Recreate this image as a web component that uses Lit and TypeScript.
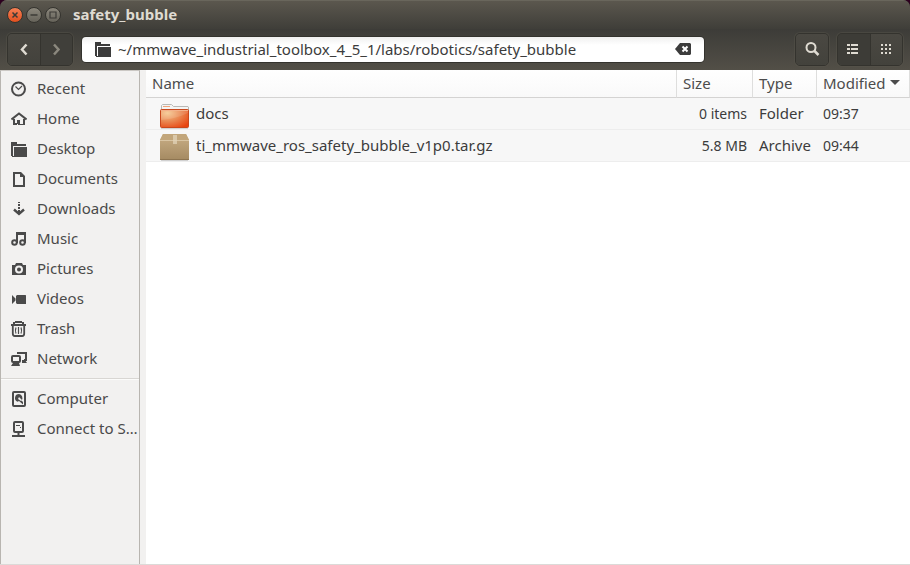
import { LitElement, html, svg, css, nothing, type TemplateResult } from "lit";
import { customElement, state } from "lit/decorators.js";
import { classMap } from "lit/directives/class-map.js";

const icons: Record<string, TemplateResult> = {
  recent: svg`<circle cx="7.5" cy="8" r="6.5" fill="none" stroke="currentColor" stroke-width="2"/><path d="M4.5 5.5 7.5 8.5 11 5" fill="none" stroke="currentColor" stroke-width="1.2"/>`,
  home: svg`<path d="M0.500 8.500 8 2.500 15.500 8.500" fill="none" stroke="currentColor" stroke-width="2"/><path fill="currentColor" d="M2 8h2v4h2V9h3v4h3V8h2v6H7v-1H6v1H2z"/>`,
  folder: svg`<path fill="currentColor" d="M0 1h6v2h9v2H2v10H0zM3 6h13v10H3z"/><path fill="currentColor" d="M1 15h3v1H1z"/>`,
  documents: svg`<path fill="currentColor" fill-rule="evenodd" d="M2 1h8l4 4v11H2zM4 3v11h8V6H9V3z"/>`,
  downloads: svg`<path fill="currentColor" d="M7 1h2v1H7zM7 3h2v2H7zM7 6h2v2H7zM7 9h2v3H7z"/><path d="M3 8.500 8 13 13 8.500" fill="none" stroke="currentColor" stroke-width="2.400"/>`,
  music: svg`<path fill="currentColor" d="M5 1h10v11h-2V4H7v8H5z"/><circle cx="3.500" cy="11.500" r="2.300" fill="none" stroke="currentColor" stroke-width="2"/><circle cx="11.500" cy="11.500" r="2.300" fill="none" stroke="currentColor" stroke-width="2"/>`,
  pictures: svg`<path fill="currentColor" fill-rule="evenodd" d="M1 4h3l1-2h6l1 2h3v10H1zM8 4.500a4 4 0 1 0 0 8 4 4 0 0 0 0-8zm0 2a2 2 0 1 1 0 4 2 2 0 0 1 0-4z"/>`,
  videos: svg`<path fill="currentColor" d="M1 4l3.500 3.500v2L1 13zM6 4h8.500l.5.500v8.500H6L5 12V5z"/>`,
  trash: svg`<path fill="currentColor" d="M4 0h7v1h2v2h2v2H0V3h2V1h2zM4 2v1h7V2z" fill-rule="evenodd"/><path d="M1.800 5v7.500q0 2.500 2 2.500h7.400q2 0 2-2.500V5" fill="none" stroke="currentColor" stroke-width="1.800"/><path d="M5 6.500q-1.200 3 0 6M7.500 6v7M10 6.500q1.200 3 0 6" fill="none" stroke="currentColor" stroke-width="1.200"/>`,
  network: svg`<path d="M7 3V2h8v7h-2" fill="none" stroke="currentColor" stroke-width="2"/><rect x="1" y="5" width="8" height="6" rx="1" fill="none" stroke="currentColor" stroke-width="2"/><path fill="currentColor" d="M2 12h6l1 3H0zM11 9h3l2 3h-5z"/>`,
  computer: svg`<rect x="2" y="1" width="12" height="14" rx="1" fill="none" stroke="currentColor" stroke-width="2"/><path fill="currentColor" fill-rule="evenodd" d="M8 3a4 4 0 0 0-1.500 7.700L8 10l4 3.500v-2.500l-1.500-1.500A4 4 0 0 0 8 3zm0 3 3 3-1 1-3-2z"/>`,
  server: svg`<rect x="3" y="1" width="9" height="10" rx="1" fill="none" stroke="currentColor" stroke-width="2"/><path fill="currentColor" d="M5 4h4v1H5zM9 6h1v1H9zM6.500 11h2v3h-2zM1 14h13v2H1z"/>`,
  back: svg`<path d="M10.500 3.500 6 8.500l4.500 5" fill="none" stroke="currentColor" stroke-width="2.500"/>`,
  forward: svg`<path d="M6 3.500l4.500 5-4.500 5" fill="none" stroke="currentColor" stroke-width="2.500"/>`,
  search: svg`<circle cx="7" cy="6.500" r="4.500" fill="none" stroke="currentColor" stroke-width="2"/><path d="M10 9.500 14.500 14" fill="none" stroke="currentColor" stroke-width="2.500"/>`,
  list: svg`<path fill="currentColor" d="M1 3h3v2H1zM5 3h7v2H5zM1 7h3v2H1zM5 7h7v2H5zM1 11h3v2H1zM5 11h7v2H5z"/>`,
  grid: svg`<path fill="currentColor" d="M3 3h2v2H3zM7 3h2v2H7zM11 3h2v2h-2zM3 7h2v2H3zM7 7h2v2H7zM11 7h2v2h-2zM3 11h2v2H3zM7 11h2v2H7zM11 11h2v2h-2z"/>`,
  clear: svg`<path fill="currentColor" d="M0 8 5 2h10l1 1v10l-1 1H5z"/><path d="M7.500 5.500l5 5m0-5-5 5" stroke="#fff" stroke-width="2"/>`,
};

const icon = (name: string) =>
  html`<svg class="icon" viewBox="0 0 16 16" aria-hidden="true">${icons[name]}</svg>`;

const folderPicture = svg`
  <defs>
    <radialGradient id="folder" cx=".25" cy=".2" r=".95">
      <stop offset="0" stop-color="#f5c78e"/><stop offset=".5" stop-color="#e98650"/><stop offset="1" stop-color="#e8430f"/>
    </radialGradient>
  </defs>
  <path d="M2.500 14V7.500l1-1h9l2 2h14.500l.5.500v5z" fill="#f4f4f3" stroke="#b9b9b6"/>
  <path d="M4 8.500h7" stroke="#f0a57b"/>
  <rect x="1.500" y="11.500" width="28" height="18" rx="1" fill="url(#folder)" stroke="#c9481c"/>
  <path d="M2 12.500h27" stroke="#f3b18a"/><path d="M2 22q14-1 27-7v-2H2z" fill="#fff" opacity=".12"/>
  <path d="M2 30.500h27" stroke="#000" opacity=".15"/>`;

const archivePicture = svg`
  <defs>
    <linearGradient id="box" x2="0" y2="1"><stop offset="0" stop-color="#c9af86"/><stop offset="1" stop-color="#a58a62"/></linearGradient>
  </defs>
  <path d="M4 4h23l3 6v19.500l-.5.500H1.500L1 29.500V10z" fill="url(#box)"/>
  <path d="M4 4h23l3 6H1z" fill="#c2a67b"/>
  <path d="M1 10.500h29" stroke="#d9c5a3"/>
  <path d="M14 5h4v9h-4z" fill="#e2d3b8" opacity=".75"/>
  <path d="M1 29.500h29" stroke="#8d7450"/><path d="M2 30.500h27" stroke="#000" opacity=".15"/>`;

interface Place { label: string; icon: string; }
interface Entry { name: string; size: string; type: string; modified: string; picture: TemplateResult; }

const places: Place[] = [
  { label: "Recent", icon: "recent" },
  { label: "Home", icon: "home" },
  { label: "Desktop", icon: "folder" },
  { label: "Documents", icon: "documents" },
  { label: "Downloads", icon: "downloads" },
  { label: "Music", icon: "music" },
  { label: "Pictures", icon: "pictures" },
  { label: "Videos", icon: "videos" },
  { label: "Trash", icon: "trash" },
  { label: "Network", icon: "network" },
];

const devices: Place[] = [
  { label: "Computer", icon: "computer" },
  { label: "Connect to S…", icon: "server" },
];

const entries: Entry[] = [
  { name: "docs", size: "0 items", type: "Folder", modified: "09:37", picture: folderPicture },
  { name: "ti_mmwave_ros_safety_bubble_v1p0.tar.gz", size: "5.8 MB", type: "Archive", modified: "09:44", picture: archivePicture },
];

const shared = css`
  * { box-sizing: border-box; }
  button, input { font: inherit; color: inherit; margin: 0; padding: 0; border: 0; background: none; }
  .icon { width: 16px; height: 16px; display: block; flex: none; }
`;

@customElement("window-header")
class WindowHeader extends LitElement {
  @state() private view = "list";

  static styles = [shared, css`
    :host { display: block; background: #2c001e; }
    .frame { border-radius: 7px 7px 0 0; overflow: hidden; background: #3c3b37; }
    .title {
      display: flex; align-items: center; gap: 3px; height: 29px; padding: 0 7px;
      background: linear-gradient(#5b574e, #3f3e39); border-top: 1px solid #69665c;
    }
    h1 { margin: 0 0 0 9px; padding-bottom: 2px; font-size: 15px; line-height: 20px; font-weight: 700; color: #dfdbd2; }
    .control {
      width: 16px; height: 16px; border-radius: 50%; color: #3c3b37;
      background: linear-gradient(#8b877c, #66635a); border: 1px solid #35342f;
    }
    .control svg { display: block; width: 14px; height: 14px; }
    .close { background: linear-gradient(#f58055, #e2501f); }
    .tools {
      display: flex; align-items: center; height: 41px; padding: 0 7px;
      background: linear-gradient(#3d3c38, #524f47);
    }
    .group { display: flex; border: 1px solid #34332e; border-radius: 5px; box-shadow: 0 0 0 1px #5a574e66; }
    .group button {
      display: grid; place-items: center; width: 32px; height: 31px; padding-bottom: 1px; color: #dfdbd2;
      background: linear-gradient(#4a4842, #43423c);
    }
    .group button:first-child { border-radius: 4px 0 0 4px; }
    .group button:last-child { border-radius: 0 4px 4px 0; }
    .group button:only-child { border-radius: 4px; }
    .group button + button { box-shadow: inset 1px 0 #34332e; }
    .group button:disabled { color: #8b887e; background: #403f3a; }
    .group .on { background: #3d3c37; }
    .path {
      flex: 1; min-width: 0; display: flex; align-items: center; gap: 7px; height: 25px;
      margin: 0 91px 0 9px; padding: 0 13px; border-radius: 4px; color: #3c3c3c;
      background: linear-gradient(#f0f0f0, #fff 8px); box-shadow: 0 0 0 1px #34332e;
    }
    .path .icon { margin-bottom: 2px; }
    .path input { flex: 1; min-width: 0; height: 25px; padding-bottom: 2px; outline: none; }
    .views { margin-left: 8px; }
  `];

  private viewButton(name: string, label: string) {
    return html`<button class=${classMap({ on: this.view === name })} aria-label=${label}
      aria-pressed=${this.view === name} @click=${() => (this.view = name)}>${icon(name)}</button>`;
  }

  render() {
    return html`
      <div class="frame">
        <div class="title">
          <button class="control close" aria-label="Close"><svg viewBox="0 0 14 14"><path d="M4.500 4.500l5 5m0-5-5 5" stroke="currentColor" stroke-width="1.500"/></svg></button>
          <button class="control" aria-label="Minimize"><svg viewBox="0 0 14 14"><path d="M3.500 7h7" stroke="currentColor" stroke-width="1.400"/></svg></button>
          <button class="control" aria-label="Maximize"><svg viewBox="0 0 14 14"><path d="M4 4h6v6H4z" fill="none" stroke="currentColor" stroke-width="1.200"/></svg></button>
          <h1>safety_bubble</h1>
        </div>
        <div class="tools">
          <div class="group">
            <button aria-label="Back">${icon("back")}</button>
            <button aria-label="Forward" disabled>${icon("forward")}</button>
          </div>
          <div class="path">
            ${icon("folder")}
            <input type="text" aria-label="Location" spellcheck="false"
              .value=${"~/mmwave_industrial_toolbox_4_5_1/labs/robotics/safety_bubble"}>
            <button aria-label="Clear">${icon("clear")}</button>
          </div>
          <div class="group"><button aria-label="Search">${icon("search")}</button></div>
          <div class="group views">
            ${this.viewButton("list", "List view")}${this.viewButton("grid", "Icon view")}
          </div>
        </div>
      </div>`;
  }
}

@customElement("places-sidebar")
class PlacesSidebar extends LitElement {
  static styles = [shared, css`
    :host { display: block; border: 1px solid #b8b5b0; border-top-color: #cbc8c4; border-bottom: 0; color: #4a4a4a; background: #f2f1f0; }
    nav { padding-top: 3px; }
    ul { list-style: none; margin: 0; padding: 0; }
    a {
      display: flex; align-items: center; gap: 10px; height: 30px; padding-left: 10px;
      color: inherit; text-decoration: none;
    }
    .label { flex: 1; min-width: 0; padding-bottom: 2px; white-space: nowrap; }
    hr { margin: 4px 0; border: 0; border-top: 1px solid #d8d6d3; border-bottom: 1px solid #fbfbfa; }
  `];

  private group(list: Place[]) {
    return html`<ul>${list.map((p) => html`
      <li><a href="#">${icon(p.icon)}<span class="label">${p.label}</span></a></li>`)}</ul>`;
  }

  render() {
    return html`<nav aria-label="Places">${this.group(places)}<hr>${this.group(devices)}</nav>`;
  }
}

@customElement("file-list")
class FileList extends LitElement {
  static styles = [shared, css`
    :host { display: block; background: #fff; color: #3c3c3c; }
    table { width: 100%; table-layout: fixed; border-collapse: separate; border-spacing: 0; }
    .size { width: 76px; }
    .type { width: 64px; }
    .modified { width: 93px; }
    th, td { padding: 0 6px 2px; white-space: nowrap; }
    th {
      height: 28px; text-align: left; font-weight: 400; color: #4c4c4c;
      background: linear-gradient(#fff, #f9f9f9); border-right: 1px solid #dededd; border-bottom: 1px solid #d4d3d2;
    }
    th button { display: flex; align-items: center; gap: 4px; }
    .arrow { border: 5px solid transparent; border-top-color: #4c4c4c; border-bottom: 0; }
    td { height: 32px; background: #f7f7f7; border-bottom: 1px solid #ededed; }
    .name, .number { padding-bottom: 0; }
    .number { font-size: 14px; }
    .end { text-align: right; }
    .file { display: flex; align-items: center; gap: 5px; padding-left: 7px; }
    .file span { padding-bottom: 2px; }
    .picture { width: 32px; height: 31px; display: block; flex: none; }
  `];

  private heading(label: string, kind: string, sorted = false) {
    return html`<th class=${kind} scope="col" aria-sort=${sorted ? "descending" : "none"}>
      <button>${label}${sorted ? html`<span class="arrow"></span>` : nothing}</button></th>`;
  }

  render() {
    return html`
      <table>
        <thead><tr>
          ${this.heading("Name", "title")}${this.heading("Size", "size")}
          ${this.heading("Type", "type")}${this.heading("Modified", "modified", true)}
        </tr></thead>
        <tbody>${entries.map((e) => html`
          <tr>
            <td class="name"><div class="file"><svg class="picture" viewBox="0 0 32 31" aria-hidden="true">${e.picture}</svg><span>${e.name}</span></div></td>
            <td class="number end">${e.size}</td><td>${e.type}</td><td class="number">${e.modified}</td>
          </tr>`)}</tbody>
      </table>`;
  }
}

@customElement("app-root")
class AppRoot extends LitElement {
  static styles = css`
    :host {
      display: flex; flex-direction: column; min-height: 100vh;
      font: 15px/20px "Noto Sans", "Open Sans", sans-serif; background: #f2f1f0;
    }
    .body {
      flex: 1; display: grid; grid-template-columns: 140px minmax(0, 1fr); column-gap: 6px;
      border-bottom: 1px solid #dcdad8;
    }
  `;

  render() {
    return html`
      <window-header></window-header>
      <div class="body"><places-sidebar></places-sidebar><file-list></file-list></div>`;
  }
}
